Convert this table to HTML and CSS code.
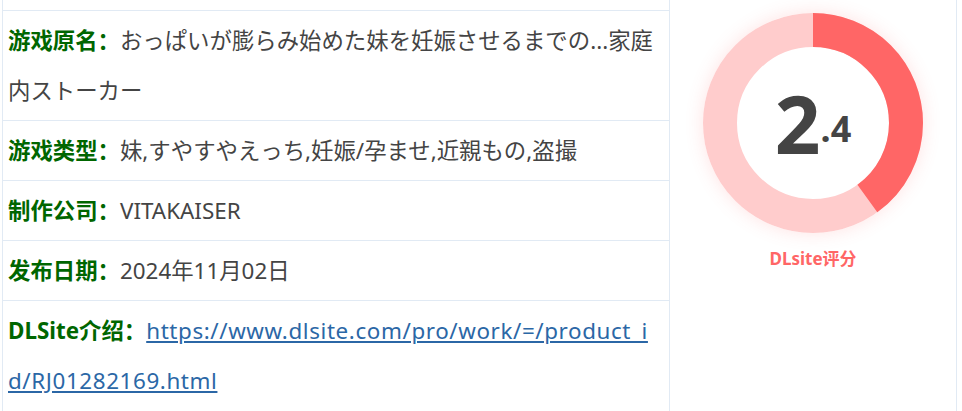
FILE: index.html
```html
<!DOCTYPE html>
<html lang="zh-CN">
<head>
    <meta charset="UTF-8">
    <meta name="viewport" content="width=device-width, initial-scale=1.0">
    <title>游戏详情</title>
    <link rel="stylesheet" href="styles.css">
</head>
<body>
    <div class="detail">
        <!-- 左侧信息列表 -->
        <div class="info">
            <div class="row">
                <span class="label">游戏原名：</span><span class="val">おっぱいが膨らみ始めた妹を妊娠させるまでの...家庭内ストーカー</span>
            </div>
            <div class="row">
                <span class="label">游戏类型：</span><span class="val">妹,すやすやえっち,妊娠/孕ませ,近親もの,盗撮</span>
            </div>
            <div class="row">
                <span class="label">制作公司：</span><span class="val">VITAKAISER</span>
            </div>
            <div class="row">
                <span class="label">发布日期：</span><span class="val">2024年11月02日</span>
            </div>
            <div class="row">
                <span class="label">DLSite介绍：</span><a class="link" href="#">https://www.dlsite.com/pro/work/=/product_id/RJ01282169.html</a>
            </div>
        </div>

        <!-- 右侧评分 -->
        <div class="score-box">
            <div class="donut">
                <svg width="220" height="220" viewBox="0 0 220 220">
                    <circle cx="110" cy="110" r="93" fill="none" stroke="#ffcccc" stroke-width="34"/>
                    <circle cx="110" cy="110" r="93" fill="none" stroke="#ff6666" stroke-width="34"
                            stroke-dasharray="233.7 584.3" transform="rotate(-90 110 110)"/>
                </svg>
                <div class="score"><span class="big">2</span><span class="small">.4</span></div>
            </div>
            <div class="score-label">DLsite评分</div>
        </div>
    </div>
</body>
</html>
```

FILE: styles.css
```css
/* 页面基本样式 */
body, html {
    margin: 0;
    background: #fff;
    font-family: "Noto Sans", "Noto Sans CJK SC", sans-serif;
}

.detail {
    display: flex;
    margin-left: 2px;
    height: 411px;
    overflow: hidden;
}

/* 左侧信息表 */
.info {
    width: 666px;
    padding-top: 10px;
    border-left: 1px solid #e1eaf4;
    border-right: 1px solid #e1eaf4;
}

.row {
    border-top: 1px solid #e1eaf4;
    padding: 5px 11px 4px 5px;
    font-size: 22.4px;
    line-height: 50px;
    color: #444;
}

.label {
    color: #006600;
    font-weight: bold;
}

.link {
    color: #2b67a6;
    letter-spacing: 0.6px;
    word-break: break-all;
}

/* 右侧评分 */
.score-box {
    width: 286px;
    border-right: 1px solid #e1eaf4;
    display: flex;
    flex-direction: column;
    align-items: center;
    padding-top: 13px;
}

.donut {
    position: relative;
    width: 220px;
    height: 220px;
    border-radius: 50%;
    box-shadow: 0 0 18px rgba(255, 102, 102, 0.18);
}

.donut svg {
    display: block;
}

.score {
    position: absolute;
    left: 0;
    top: 0;
    width: 220px;
    height: 220px;
    display: flex;
    justify-content: center;
    align-items: center;
    color: #444;
    font-weight: bold;
}

.score .big {
    font-size: 80px;
    line-height: 1;
}

.score .small {
    font-size: 36px;
    line-height: 1;
    position: relative;
    top: 6px;
}

.score-label {
    margin-top: 16px;
    color: #ff6666;
    font-size: 17px;
    font-weight: bold;
    line-height: 20px;
}
```
